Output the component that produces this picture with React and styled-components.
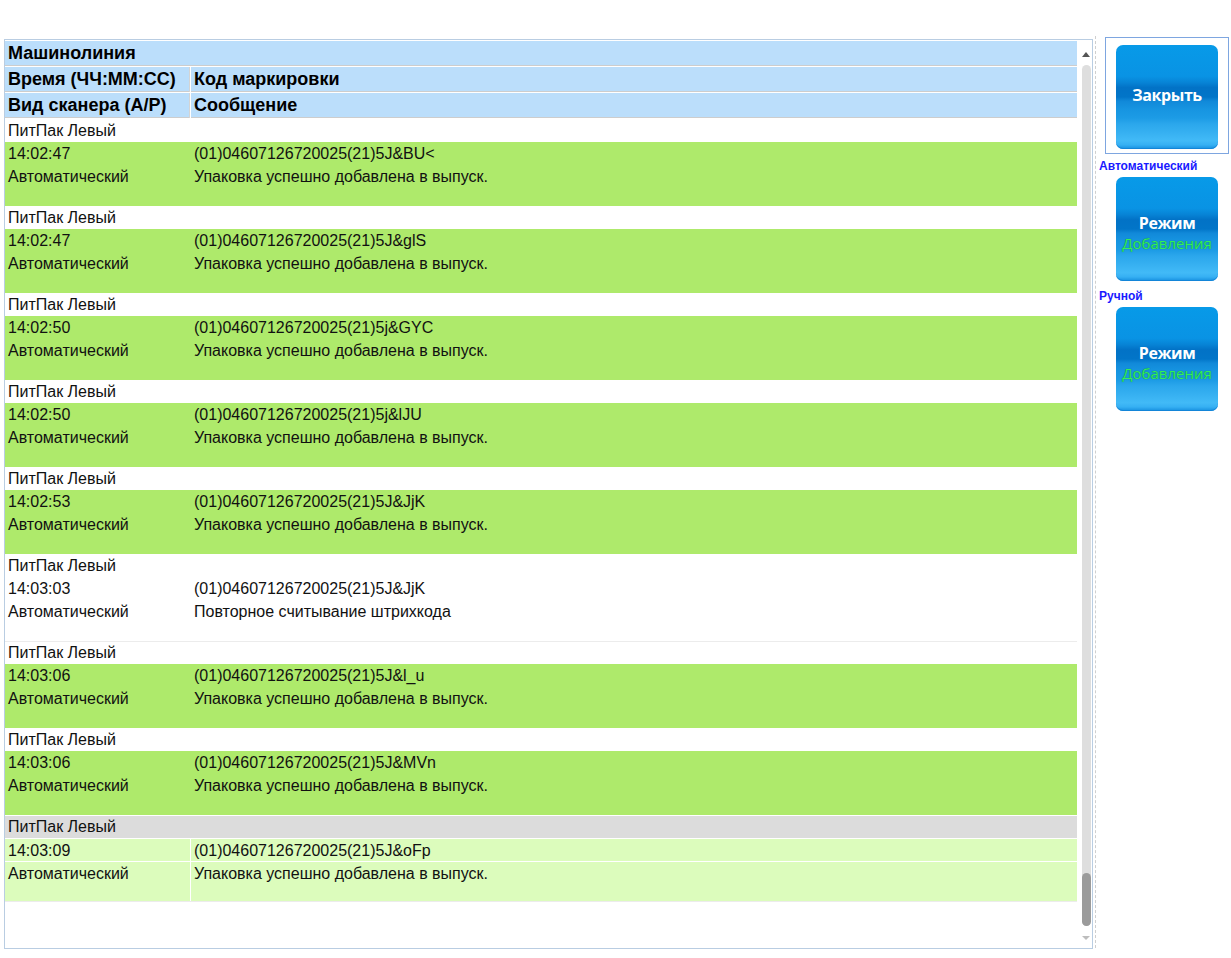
import React from 'react'
import styled, { createGlobalStyle } from 'styled-components'

const GlobalStyle = createGlobalStyle`
  html, body {
    margin: 0;
    padding: 0;
    background: #fff;
    font-family: "Liberation Sans", Arial, sans-serif;
  }
`

const Page = styled.div`
  display: flex;
  align-items: flex-start;
  padding: 37px 0 0 4px;
  width: 1231px;
  height: 958px;
  box-sizing: border-box;
`

const LogPanel = styled.div`
  display: flex;
  width: 1089px;
  height: 910px;
  margin-top: 2px;
  border: 1px solid #b9cde2;
  box-sizing: border-box;
`

const TableArea = styled.div`
  width: 1072px;
  padding-top: 1px;
  overflow: hidden;
`

// ------------------------ header
const HeadRow = styled.div`
  display: grid;
  grid-template-columns: ${p => (p.$single ? '1fr' : '184px 1fr')};
  column-gap: 2px;
  margin-bottom: 1px;
`

const HeadCell = styled.div`
  height: 24px;
  line-height: 25px;
  padding-left: 3px;
  background: #bbdefb;
  border-bottom: 1px solid #cdcdcd;
  box-shadow: ${p => (p.$first ? '1px 0 0 #d4d4d4' : 'none')};
  font-weight: bold;
  font-size: 18px;
  color: #000;
  white-space: nowrap;
`

const Body = styled.div`
  padding-top: 1px;
`

// ------------------------ groups
const Group = styled.div`
  display: grid;
  grid-template-columns: 186px 1fr;
  row-gap: ${p => (p.$sel ? '1px' : '0')};
  border-bottom: 1px solid ${p => (p.$sel || p.$plain ? '#ececec' : '#fff')};
`

const NameCell = styled.div`
  grid-column: 1 / span 2;
  height: 22px;
  line-height: 22px;
  padding-left: 3px;
  font-size: 16px;
  color: #111;
  background: ${p => (p.$sel ? '#dcdcdc' : 'transparent')};
`

const DataCell = styled.div`
  height: ${p => p.$h}px;
  line-height: 23px;
  padding-left: 3px;
  font-size: 16px;
  color: #111;
  white-space: nowrap;
  background: ${p => p.$bg};
  box-shadow: ${p => (p.$sel && p.$first ? 'inset -1px 0 0 #fff' : 'none')};
`

// ------------------------ scrollbar
const ScrollCol = styled.div`
  width: 15px;
  display: flex;
  flex-direction: column;
  align-items: center;
  padding: 5px 0 1px 3px;
  box-sizing: border-box;
`

const Arrow = styled.div`
  height: 18px;
  display: flex;
  align-items: center;
  justify-content: center;
  &::after {
    content: '';
    border-left: 4px solid transparent;
    border-right: 4px solid transparent;
    ${p => (p.$down ? 'border-top: 4px solid #bdbdbd;' : 'border-bottom: 5px solid #555;')}
  }
`

const Track = styled.div`
  flex: 1;
  width: 9px;
  margin: 2px 0 3px;
  border-radius: 5px;
  background: #dedede;
  display: flex;
  flex-direction: column;
`

const Thumb = styled.div`
  margin-top: auto;
  height: 53px;
  border-radius: 5px;
  background: #9b9b9b;
`

// ------------------------ side panel
const Divider = styled.div`
  align-self: stretch;
  margin: -1px 0 0 2px;
  height: 912px;
  border-left: 1px dashed #cfcfcf;
`

const Side = styled.div`
  display: flex;
  flex-direction: column;
  padding-left: 3px;
`

const CloseFrame = styled.div`
  margin-left: 6px;
  width: 124px;
  height: 117px;
  border: 1px solid #7ea6e0;
  box-sizing: border-box;
  padding: 7px 0 0 10px;
`

const ModeLabel = styled.div`
  margin-top: ${p => p.$top}px;
  font-size: 12px;
  line-height: 14px;
  font-weight: bold;
  color: #1a1aff;
`

const BlueButton = styled.button`
  width: 102px;
  height: 104px;
  margin: ${p => (p.$side ? '4px 0 0 17px' : '0')};
  padding: ${p => (p.$side ? '8px 0 0' : '0 0 4px')};
  border: none;
  border-radius: 7px;
  display: flex;
  flex-direction: column;
  align-items: center;
  justify-content: center;
  font-family: "Open Sans", "Noto Sans", sans-serif;
  font-size: 15px;
  line-height: 20px;
  cursor: pointer;
  background: linear-gradient(
    180deg,
    #079ae8 0%,
    #0993e4 30%,
    #0784d6 36%,
    #0272c6 41%,
    #0275c8 50%,
    #1189d9 54%,
    #1795e1 62%,
    #1c9be5 70%,
    #2ba7ec 76%,
    #36b0f1 84%,
    #42baf7 92%,
    #36b0f3 96%,
    #178fdf 100%
  );
  box-shadow: inset 0 -1px 0 #1385d8;
`

const BtnTitle = styled.span`
  color: #fff;
  font-weight: bold;
  font-size: 16px;
  letter-spacing: -0.4px;
`

const BtnSub = styled.span`
  color: #33ef5c;
  text-shadow: 0 0 1px #0b6d2c;
`

const GREEN = '#aeea6b'
const PALE = '#dcfcbc'

const rows = [
  { t: '14:02:47', code: '(01)04607126720025(21)5J&BU<', msg: 'Упаковка успешно добавлена в выпуск.', ok: true },
  { t: '14:02:47', code: '(01)04607126720025(21)5J&glS', msg: 'Упаковка успешно добавлена в выпуск.', ok: true },
  { t: '14:02:50', code: '(01)04607126720025(21)5j&GYC', msg: 'Упаковка успешно добавлена в выпуск.', ok: true },
  { t: '14:02:50', code: '(01)04607126720025(21)5j&lJU', msg: 'Упаковка успешно добавлена в выпуск.', ok: true },
  { t: '14:02:53', code: '(01)04607126720025(21)5J&JjK', msg: 'Упаковка успешно добавлена в выпуск.', ok: true },
  { t: '14:03:03', code: '(01)04607126720025(21)5J&JjK', msg: 'Повторное считывание штрихкода', ok: false },
  { t: '14:03:06', code: '(01)04607126720025(21)5J&l_u', msg: 'Упаковка успешно добавлена в выпуск.', ok: true },
  { t: '14:03:06', code: '(01)04607126720025(21)5J&MVn', msg: 'Упаковка успешно добавлена в выпуск.', ok: true },
  { t: '14:03:09', code: '(01)04607126720025(21)5J&oFp', msg: 'Упаковка успешно добавлена в выпуск.', ok: true, sel: true },
]

function LogGroup({ row }) {
  const bg = row.sel ? PALE : row.ok ? GREEN : 'transparent'
  const timeH = row.sel ? 22 : 23
  const msgH = row.sel ? 39 : 41
  return (
    <Group $sel={row.sel} $plain={!row.ok}>
      <NameCell $sel={row.sel}>ПитПак Левый</NameCell>
      <DataCell $first $sel={row.sel} $bg={bg} $h={timeH}>{row.t}</DataCell>
      <DataCell $bg={bg} $h={timeH}>{row.code}</DataCell>
      <DataCell $first $sel={row.sel} $bg={bg} $h={msgH}>Автоматический</DataCell>
      <DataCell $bg={bg} $h={msgH}>{row.msg}</DataCell>
    </Group>
  )
}

export default function App() {
  return (
    <Page>
      <GlobalStyle />

      <LogPanel>
        <TableArea>
          <HeadRow $single>
            <HeadCell>Машинолиния</HeadCell>
          </HeadRow>
          <HeadRow>
            <HeadCell $first>Время (ЧЧ:ММ:СС)</HeadCell>
            <HeadCell>Код маркировки</HeadCell>
          </HeadRow>
          <HeadRow>
            <HeadCell $first>Вид сканера (А/Р)</HeadCell>
            <HeadCell>Сообщение</HeadCell>
          </HeadRow>
          <Body>
            {rows.map((row, i) => (
              <LogGroup key={i} row={row} />
            ))}
          </Body>
        </TableArea>

        <ScrollCol>
          <Arrow />
          <Track>
            <Thumb />
          </Track>
          <Arrow $down />
        </ScrollCol>
      </LogPanel>

      <Divider />

      <Side>
        <CloseFrame>
          <BlueButton>
            <BtnTitle>Закрыть</BtnTitle>
          </BlueButton>
        </CloseFrame>

        <ModeLabel $top={5}>Автоматический</ModeLabel>
        <BlueButton $side>
          <BtnTitle>Режим</BtnTitle>
          <BtnSub>Добавления</BtnSub>
        </BlueButton>

        <ModeLabel $top={8}>Ручной</ModeLabel>
        <BlueButton $side>
          <BtnTitle>Режим</BtnTitle>
          <BtnSub>Добавления</BtnSub>
        </BlueButton>
      </Side>
    </Page>
  )
}
